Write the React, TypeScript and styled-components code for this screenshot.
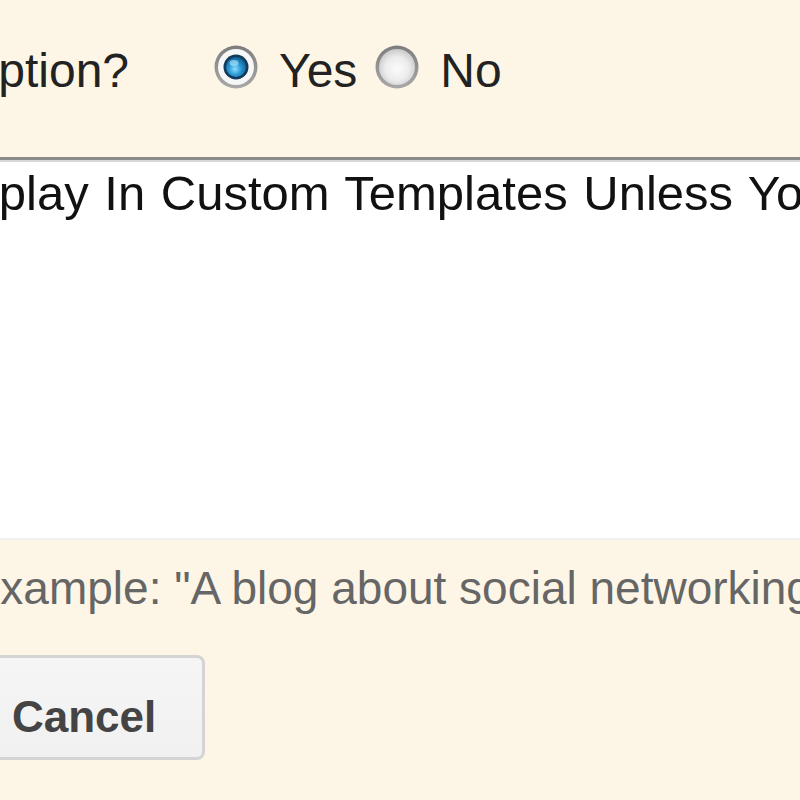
import React from "react";
import styled, { createGlobalStyle } from "styled-components";

const GlobalStyle = createGlobalStyle`
  html, body {
    margin: 0;
    padding: 0;
    background: #fdf6e6;
    overflow: hidden;
  }
  body {
    font-family: "Liberation Sans", Arial, sans-serif;
    color: #222;
  }
`;

const Page = styled.div`
  width: 800px;
  height: 800px;
  overflow: hidden;
  display: flex;
  flex-direction: column;
  align-items: flex-start;
`;

const QuestionRow = styled.div`
  display: flex;
  align-items: center;
  height: 56px;
  margin-top: 43px;
  font-size: 48px;
  line-height: 56px;
  white-space: nowrap;
`;

const Label = styled.span<{ $shift: number }>`
  margin-left: ${(p) => p.$shift}px;
  margin-right: 84px;
`;

const RadioOption = styled.label`
  display: flex;
  align-items: center;
  gap: 20px;
  margin-right: 17px;
  cursor: pointer;
`;

const RadioMark = styled.svg`
  width: 46px;
  height: 46px;
  flex: none;
  margin-bottom: 8px;
`;

const Editor = styled.textarea<{ $shift: number }>`
  box-sizing: border-box;
  margin-top: 58px;
  margin-left: ${(p) => p.$shift}px;
  width: 1100px;
  height: 383px;
  padding: 5px 8px;
  border: none;
  border-top: 3px solid #8a8a8a;
  border-bottom: 2px solid #efefef;
  box-shadow: inset 0 2px 0 #d8d8d8;
  background: #fff;
  font-family: "Liberation Sans", Arial, sans-serif;
  font-size: 49px;
  line-height: 56px;
  word-spacing: 2px;
  color: #111;
  resize: none;
  outline: none;
  overflow: hidden;
  white-space: pre;
`;

const Hint = styled.p<{ $shift: number }>`
  margin: 22px 0 0 ${(p) => p.$shift}px;
  font-size: 46px;
  line-height: 52px;
  color: #666;
  white-space: nowrap;
`;

const Actions = styled.div`
  display: flex;
  margin-top: 41px;
`;

const Button = styled.button<{ $shift?: number }>`
  box-sizing: border-box;
  height: 105px;
  margin-left: ${(p) => p.$shift ?? 0}px;
  padding: 19px 46px 0 32px;
  border: 3px solid #d4d4d4;
  border-radius: 8px;
  background: linear-gradient(#f5f5f5, #f1f1f1);
  font-family: "Liberation Sans", Arial, sans-serif;
  font-weight: bold;
  font-size: 44px;
  line-height: 48px;
  color: #444;
  text-align: left;
  cursor: pointer;
`;

function Radio({ checked }: { checked?: boolean }) {
  const id = checked ? "on" : "off";
  return (
    <RadioMark viewBox="0 0 46 46">
      <defs>
        <linearGradient id={`ring-${id}`} x1="0" y1="0" x2="0" y2="1">
          <stop offset="0" stopColor="#7d7d7d" />
          <stop offset="1" stopColor="#a9a9a9" />
        </linearGradient>
        <radialGradient id={`well-${id}`} cx="0.5" cy="0.55" r="0.55">
          <stop offset="0" stopColor="#fbfbfb" />
          <stop offset="0.6" stopColor="#ececec" />
          <stop offset="1" stopColor="#c9c9c9" />
        </radialGradient>
        <radialGradient id="dot" cx="0.45" cy="0.6" r="0.6">
          <stop offset="0" stopColor="#8fe0ff" />
          <stop offset="0.5" stopColor="#2b9ad6" />
          <stop offset="1" stopColor="#0f5f95" />
        </radialGradient>
      </defs>
      <circle cx="23" cy="23" r="21.5" fill={`url(#ring-${id})`} />
      <circle cx="23" cy="23" r="18" fill={checked ? "#f7f7f7" : `url(#well-${id})`} />
      {checked && (
        <>
          <circle cx="23" cy="23" r="12.5" fill="#123a5a" />
          <circle cx="23" cy="23" r="10" fill="url(#dot)" />
          <ellipse cx="21" cy="19" rx="4.5" ry="3" fill="#b9ecff" opacity="0.6" />
        </>
      )}
    </RadioMark>
  );
}

export default function App() {
  return (
    <Page>
      <GlobalStyle />
      <QuestionRow>
        <Label $shift={-450}>Enable search description?</Label>
        <RadioOption>
          <Radio checked />
          Yes
        </RadioOption>
        <RadioOption>
          <Radio />
          No
        </RadioOption>
      </QuestionRow>
      <Editor
        $shift={-80}
        readOnly
        defaultValue="Display In Custom Templates Unless You Add The Meta Tag"
      />
      <Hint $shift={-107}>
        For example: "A blog about social networking and the web."
      </Hint>
      <Actions>
        <Button $shift={-23}>Cancel</Button>
      </Actions>
    </Page>
  );
}
